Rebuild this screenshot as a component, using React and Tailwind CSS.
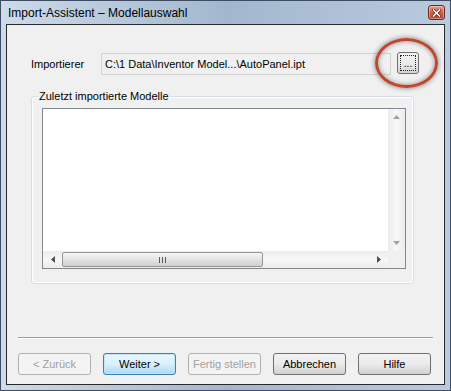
import React from "react";

function WinButton({ children, variant = "normal" }) {
  const styles = {
    normal:
      "border-[#707070] bg-gradient-to-b from-[#f2f2f2] via-[#ebebeb] to-[#d0d0d0] text-black",
    default:
      "border-[#3c7fb1] bg-gradient-to-b from-[#eaf6fd] via-[#d9f0fc] to-[#a7d9f5] text-black shadow-[inset_0_0_0_1px_#c4e5f6]",
    disabled: "border-[#adb2b5] bg-[#f4f4f4] text-[#a0a0a0]",
  };
  return (
    <button
      type="button"
      className={`w-[73px] h-[22px] rounded-[3px] border text-[11px] leading-none flex items-center justify-center ${styles[variant]}`}
    >
      {children}
    </button>
  );
}

function Arrow({ dir, color }) {
  const pts = {
    up: "0,4 3.5,0 7,4",
    down: "0,0 3.5,4 7,0",
    left: "4,0 0,3.5 4,7",
    right: "0,0 4,3.5 0,7",
  };
  const vertical = dir === "up" || dir === "down";
  return (
    <svg width={vertical ? 7 : 4} height={vertical ? 4 : 7} viewBox={vertical ? "0 0 7 4" : "0 0 4 7"}>
      <polygon points={pts[dir]} fill={color} />
    </svg>
  );
}

export default function App() {
  return (
    <div className="w-[451px] h-[391px] flex flex-col border border-[#3d4c60] bg-gradient-to-r from-[#cddbea] via-[#a2b7ce] to-[#b9cadd] font-['Liberation_Sans',Arial,sans-serif]">
      {/* title bar */}
      <div className="h-[23px] flex items-center justify-between pl-[7px] pr-[5px]">
        <span className="text-[12px] text-black">Import-Assistent – Modellauswahl</span>
        <div className="w-[17px] h-[15px] rounded-[3px] border border-[#6e2b22] bg-gradient-to-b from-[#eaa08e] via-[#d35a43] to-[#c2452e] flex items-center justify-center shadow-[inset_0_0_0_1px_rgba(255,255,255,0.35)]">
          <svg width="9" height="8" viewBox="0 0 9 8">
            <path d="M1.5 1 L7.5 7 M7.5 1 L1.5 7" stroke="#5a1d14" strokeWidth="3" strokeLinecap="square" />
            <path d="M1.5 1 L7.5 7 M7.5 1 L1.5 7" stroke="#ffffff" strokeWidth="1.6" strokeLinecap="square" />
          </svg>
        </div>
      </div>

      {/* client area */}
      <div className="mx-[5px] mb-[5px] flex-1 border border-[#2a2a2a] bg-[#f0f0f0] flex flex-col text-[11px] text-black">
        <div className="flex items-center pt-[28px] pl-[24px]">
          <span className="w-[70px]">Importierer</span>
          <div className="w-[290px] h-[22px] border border-[#d2d2d2] bg-[#f0f0f0] flex items-center pl-[3px]">
            C:\1 Data\Inventor Model...\AutoPanel.ipt
          </div>
          <div className="relative ml-[6px] -mt-[2px]">
            <button
              type="button"
              className="w-[22px] h-[22px] rounded-[3px] border border-[#707070] bg-gradient-to-b from-[#f2f2f2] via-[#ebebeb] to-[#d4d4d4] p-[2px]"
            >
              <div className="w-full h-full border border-dotted border-[#222] flex items-end justify-center pb-[1px] text-[10px] leading-none">
                ...
              </div>
            </button>
            <div className="absolute left-[-22px] top-[-14px] w-[63px] h-[50px] rounded-[50%] border-[3px] border-[#c0462d] shadow-[0_0_4px_1px_rgba(0,0,0,0.35),inset_0_0_4px_1px_rgba(0,0,0,0.3)] pointer-events-none" />
          </div>
        </div>

        {/* group box */}
        <div className="relative ml-[24px] mt-[21px] w-[383px] h-[188px] border border-[#d5dfe5] rounded-[3px] shadow-[inset_0_0_0_1px_#ffffff] pt-[11px] pl-[10px]">
          <span className="absolute left-[6px] top-[-8px] px-[1px] bg-[#f0f0f0] leading-[14px]">
            Zuletzt importierte Modelle
          </span>
          <div className="w-[364px] h-[161px] border border-[#828790] flex flex-col bg-white">
            <div className="flex flex-1">
              <div className="flex-1 bg-white" />
              <div className="w-[17px] flex flex-col justify-between items-center bg-gradient-to-r from-[#ececec] via-[#f7f7f7] to-[#ececec] py-[6px]">
                <Arrow dir="up" color="#a3a3a3" />
                <Arrow dir="down" color="#a3a3a3" />
              </div>
            </div>
            <div className="flex h-[17px]">
              <div className="flex-1 flex items-center bg-gradient-to-b from-[#ececec] via-[#f7f7f7] to-[#ececec]">
                <div className="w-[19px] flex justify-center">
                  <Arrow dir="left" color="#4d4d4d" />
                </div>
                <div className="w-[201px] h-[15px] rounded-[2px] border border-[#979797] bg-gradient-to-b from-[#f4f4f4] via-[#e4e4e4] to-[#cfcfcf] flex items-center justify-center gap-[2px]">
                  <div className="w-[1px] h-[6px] bg-[#5c5c5c]" />
                  <div className="w-[1px] h-[6px] bg-[#5c5c5c]" />
                  <div className="w-[1px] h-[6px] bg-[#5c5c5c]" />
                </div>
                <div className="flex-1" />
                <div className="w-[19px] flex justify-center">
                  <Arrow dir="right" color="#4d4d4d" />
                </div>
              </div>
              <div className="w-[17px] bg-[#f0f0f0]" />
            </div>
          </div>
        </div>

        {/* separator */}
        <div className="mx-[11px] mt-[53px] h-[2px] border-t border-[#a0a0a0] border-b border-b-white" />

        {/* buttons */}
        <div className="flex gap-[12px] pl-[11px] mt-[14px]">
          <WinButton variant="disabled">&lt; Zurück</WinButton>
          <WinButton variant="default">Weiter &gt;</WinButton>
          <WinButton variant="disabled">Fertig stellen</WinButton>
          <WinButton>Abbrechen</WinButton>
          <WinButton>Hilfe</WinButton>
        </div>
      </div>
    </div>
  );
}
